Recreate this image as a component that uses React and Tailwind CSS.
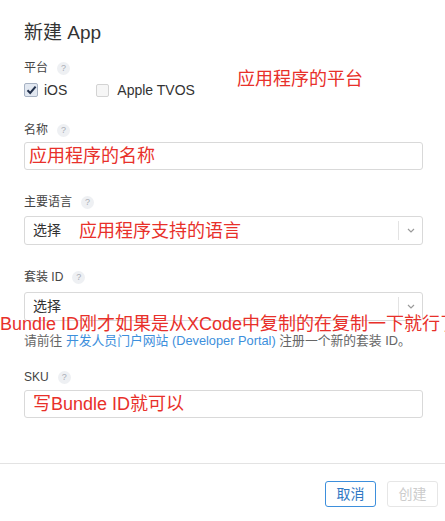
import React from 'react';

const font = { fontFamily: '"Liberation Sans", "Noto Sans CJK SC", sans-serif' };

function Help() {
  return (
    <span className="ml-[9px] inline-flex h-[13px] w-[13px] items-center justify-center rounded-full bg-[#eef0f3] text-[9px] leading-none text-[#a9adb5]">
      ?
    </span>
  );
}

function Label({ children, className = '' }) {
  return (
    <div className={`flex h-[16px] items-center text-[12px] leading-[16px] text-[#444] ${className}`}>
      <span>{children}</span>
      <Help />
    </div>
  );
}

function Checkbox({ checked }) {
  if (checked) {
    return (
      <span className="flex h-[14px] w-[14px] shrink-0 items-center justify-center rounded-[2px] border border-[#a7b2c3] bg-[#e2e8f1]">
        <svg width="11" height="10" viewBox="0 0 11 10">
          <path d="M1.5 5.2 L4.2 8 L9.6 1.6" fill="none" stroke="#24324d" strokeWidth="2" />
        </svg>
      </span>
    );
  }
  return <span className="block h-[13px] w-[13px] shrink-0 rounded-[2px] border border-[#d3d3d3] bg-[#f6f6f6]" />;
}

function Select({ children, className = '' }) {
  return (
    <div className={`flex h-[29px] items-center rounded-[3px] border border-[#d9d9d9] bg-white ${className}`}>
      <div className="flex flex-1 items-center pl-[8px] text-[14px] text-[#333]">{children}</div>
      <div className="h-[19px] w-px bg-[#e3e3e3]" />
      <div className="flex w-[23px] items-center justify-center">
        <svg width="8" height="5" viewBox="0 0 8 5">
          <path d="M1 1 L4 4 L7 1" fill="none" stroke="#9a9a9a" strokeWidth="1.2" />
        </svg>
      </div>
    </div>
  );
}

export default function App() {
  const red = 'text-[18px] leading-[22px] text-[#e8302a]';

  return (
    <div className="relative h-[521px] w-[445px] overflow-hidden bg-white" style={font}>
      <div className="pl-[24px] pr-[22px] pt-[21px]">
        <h1 className="text-[19px] leading-[24px] text-[#333]">新建 App</h1>

        {/* 平台 */}
        <div className="relative">
          <Label className="mt-[15px]">平台</Label>
          <div className="mt-[5px] flex h-[18px] items-center text-[14px] text-[#333]">
            <Checkbox checked />
            <span className="ml-[6px]">iOS</span>
            <span className="ml-[29px]"><Checkbox /></span>
            <span className="ml-[8px]">Apple TVOS</span>
          </div>
          <div className={`absolute left-[213px] top-[8px] ${red}`}>应用程序的平台</div>
        </div>

        {/* 名称 */}
        <Label className="mt-[23px]">名称</Label>
        <div className="mt-[4px] flex h-[28px] items-center rounded-[3px] border border-[#d9d9d9] pl-[4px]">
          <span className={red}>应用程序的名称</span>
        </div>

        {/* 主要语言 */}
        <Label className="mt-[24px]">主要语言</Label>
        <Select className="mt-[6px]">
          <span>选择</span>
          <span className={`ml-[18px] ${red}`}>应用程序支持的语言</span>
        </Select>

        {/* 套装 ID */}
        <Label className="mt-[24px]">套装 ID</Label>
        <div className="relative">
          <Select className="mt-[7px]">
            <span>选择</span>
          </Select>
          <div className="absolute left-[-24px] top-[23px] whitespace-nowrap text-[18px] leading-[18px] text-[#e8302a]">
            Bundle ID刚才如果是从XCode中复制的在复制一下就行了
          </div>
        </div>
        <p className="mt-[12px] whitespace-nowrap text-[12.8px] leading-[16px] text-[#666]">
          请前往 <span className="text-[#3d8fdc]">开发人员门户网站 (Developer Portal)</span> 注册一个新的套装 ID。
        </p>

        {/* SKU */}
        <Label className="mt-[20px]">SKU</Label>
        <div className="mt-[5px] flex h-[28px] items-center rounded-[3px] border border-[#d9d9d9] pl-[8px]">
          <span className={red}>写Bundle ID就可以</span>
        </div>
      </div>

      {/* footer */}
      <div className="absolute left-0 right-0 top-[463px] flex justify-end gap-[11px] border-t border-[#e3e3e3] pr-[7px] pt-[17px]">
        <button className="h-[26px] w-[51px] rounded-[3px] border border-[#3d8fdc] bg-white text-[14px] text-[#2f78c4]">
          取消
        </button>
        <button className="h-[26px] w-[51px] rounded-[3px] border border-[#e6e6e6] bg-white text-[14px] text-[#cccccc]">
          创建
        </button>
      </div>
    </div>
  );
}
